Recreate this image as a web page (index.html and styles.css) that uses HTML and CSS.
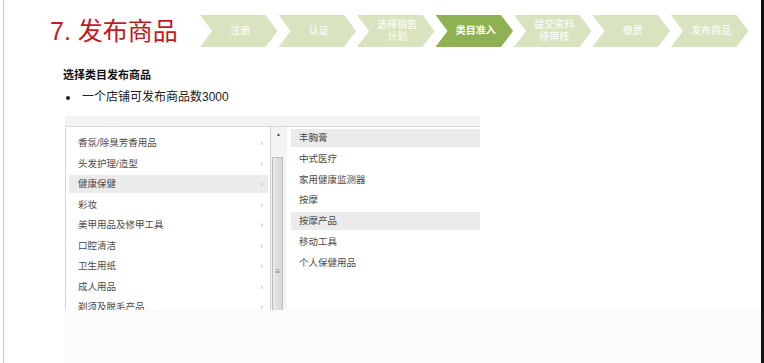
FILE: index.html
```html
<!DOCTYPE html>
<html lang="zh-CN">
<head>
  <meta charset="UTF-8" />
  <meta name="viewport" content="width=device-width, initial-scale=1" />
  <title>7. 发布商品</title>
  <link rel="stylesheet" href="styles.css">
</head>
<body>

<div class="slide">
  <header class="top">
    <h1 class="title">7. 发布商品</h1>
    <ol class="steps">
      <li class="step">注册</li>
      <li class="step">认证</li>
      <li class="step">选择销售<br>计划</li>
      <li class="step active">类目准入</li>
      <li class="step">提交资料<br>待审核</li>
      <li class="step">缴费</li>
      <li class="step">发布商品</li>
    </ol>
  </header>

  <section class="intro">
    <h2>选择类目发布商品</h2>
    <ul class="bullets">
      <li>一个店铺可发布商品数3000</li>
    </ul>
  </section>

  <div class="shot">
    <div class="shot-win">
      <div class="shot-bar"></div>
      <div class="panes">
        <div class="pane-left">
          <ul class="cat-list">
            <li>个人用品<span class="arr">›</span></li>
            <li>香氛/除臭芳香用品<span class="arr">›</span></li>
            <li>头发护理/造型<span class="arr">›</span></li>
            <li class="sel">健康保健<span class="arr">›</span></li>
            <li>彩妆<span class="arr">›</span></li>
            <li>美甲用品及修甲工具<span class="arr">›</span></li>
            <li>口腔清洁<span class="arr">›</span></li>
            <li>卫生用纸<span class="arr">›</span></li>
            <li>成人用品<span class="arr">›</span></li>
            <li>剃须及脱毛产品<span class="arr">›</span></li>
          </ul>
        </div>
        <div class="scrollbar">
          <span class="sb-up">▲</span>
          <div class="sb-thumb"><span class="grip">≡</span></div>
        </div>
        <div class="pane-right">
          <ul class="sub-list">
            <li class="sel">丰胸膏</li>
            <li>中式医疗</li>
            <li>家用健康监测器</li>
            <li>按摩</li>
            <li class="sel">按摩产品</li>
            <li>移动工具</li>
            <li>个人保健用品</li>
          </ul>
        </div>
      </div>
    </div>
    <div class="shot-foot"></div>
  </div>
</div>

</body>
</html>
```

FILE: styles.css
```css
html, body {
  margin: 0;
  background: #fff;
  font-family: "Liberation Sans", "Noto Sans CJK SC", sans-serif;
  overflow: hidden;
}
.slide {
  width: 757px;
  height: 363px;
  margin-left: 3px;
  border-left: 1px solid #c9c9c9;
  border-right: 3px solid #111;
  overflow: hidden;
}
.top {
  display: flex;
  align-items: center;
  padding-top: 15px;
  height: 32px;
}
.title {
  margin: 0 0 0 46px;
  width: 150px;
  font-size: 25px;
  font-weight: normal;
  color: #c21a1f;
  line-height: 32px;
  white-space: nowrap;
}
.steps {
  display: flex;
  list-style: none;
  margin: 0;
  padding: 0;
}
.step {
  width: 77.5px;
  height: 32px;
  margin-right: 1px;
  padding-left: 3px;
  box-sizing: border-box;
  display: flex;
  align-items: center;
  justify-content: center;
  text-align: center;
  background: #d8e4c0;
  color: #fff;
  font-size: 10px;
  line-height: 12px;
  clip-path: polygon(0 0, calc(100% - 12px) 0, 100% 50%, calc(100% - 12px) 100%, 0 100%, 12px 50%);
}
.step.active {
  background: #8eb154;
  font-weight: bold;
}
.intro {
  margin: 21px 0 0 59px;
}
.intro h2 {
  margin: 0;
  font-size: 11px;
  line-height: 14px;
  font-weight: bold;
  color: #111;
}
.bullets {
  margin: 7px 0 0;
  padding: 0 0 0 17px;
  font-size: 12px;
  line-height: 16px;
  color: #222;
}
.bullets li {
  padding-left: 2px;
}
.shot {
  margin: 11px 0 0 61px;
}
.shot-win {
  width: 415px;
}
.shot-bar {
  height: 10px;
  background: #f3f3f3;
  border-bottom: 1px solid #d9d9d9;
}
.panes {
  display: flex;
  height: 183px;
  overflow: hidden;
  background: #fff;
}
.pane-left {
  width: 204px;
  border-left: 1px solid #d6d6d6;
  overflow: hidden;
}
.cat-list, .sub-list {
  list-style: none;
  margin: 0;
  padding: 0;
  font-size: 9.5px;
  color: #4a4a4a;
}
.cat-list {
  margin-top: -13.5px;
}
.cat-list li {
  position: relative;
  height: 18px;
  line-height: 18px;
  margin: 0 2px 2.5px 3px;
  padding-left: 9px;
}
.cat-list li.sel, .sub-list li.sel {
  background: #ebebeb;
}
.arr {
  position: absolute;
  right: 5px;
  top: 0;
  color: #b5b5b5;
  font-size: 9px;
}
.scrollbar {
  position: relative;
  width: 16px;
  border-left: 1px solid #cfcfcf;
  background: #f4f4f4;
}
.sb-up {
  position: absolute;
  top: 4px;
  left: 5px;
  font-size: 5px;
  color: #555;
}
.sb-thumb {
  margin: 30px 0 0 1px;
  width: 11px;
  height: 228px;
  box-sizing: border-box;
  border: 1px solid #bdbdbd;
  background: linear-gradient(to right, #e9e9e9, #d6d6d6);
  display: flex;
  justify-content: center;
  align-items: center;
}
.grip {
  font-size: 8px;
  color: #777;
}
.pane-right {
  flex: 1;
  padding: 2px 0 0 4px;
}
.sub-list li {
  height: 18px;
  line-height: 18px;
  margin-bottom: 2.8px;
  padding-left: 8px;
}
.shot-foot {
  height: 60px;
  background: #fbfbfb;
}
```
